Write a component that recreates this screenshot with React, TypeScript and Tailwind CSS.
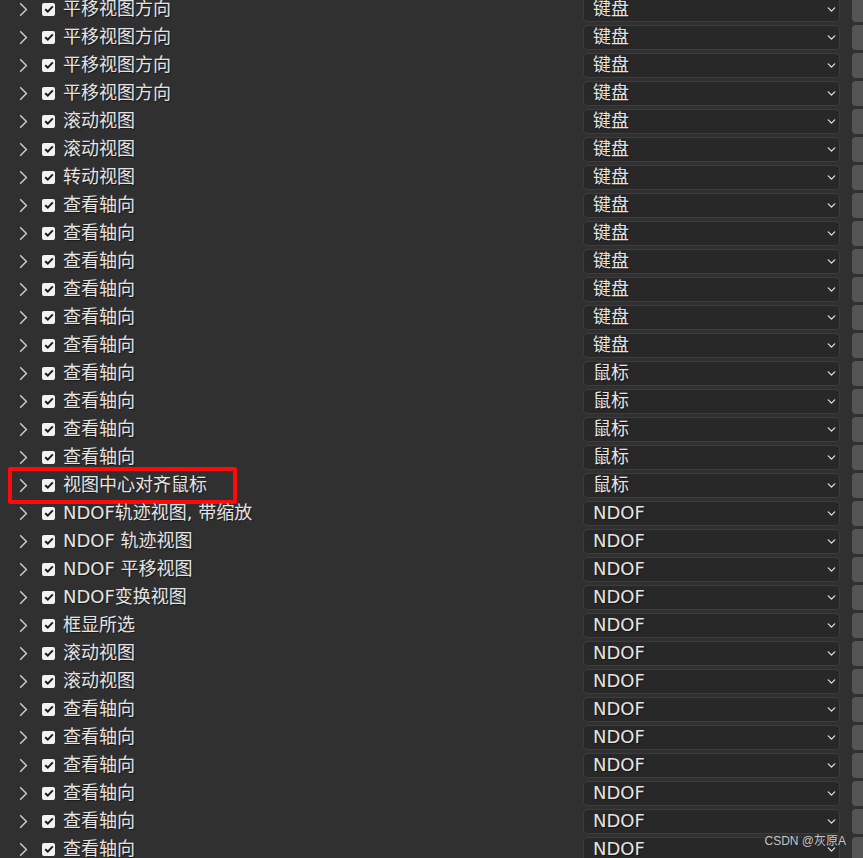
import { ChevronDown } from "lucide-react";

type Row = { label: string; device: string };

const rows: Row[] = [
  ...Array(4).fill({ label: "平移视图方向", device: "键盘" }),
  { label: "滚动视图", device: "键盘" },
  { label: "滚动视图", device: "键盘" },
  { label: "转动视图", device: "键盘" },
  ...Array(6).fill({ label: "查看轴向", device: "键盘" }),
  ...Array(4).fill({ label: "查看轴向", device: "鼠标" }),
  { label: "视图中心对齐鼠标", device: "鼠标" },
  { label: "NDOF轨迹视图, 带缩放", device: "NDOF" },
  { label: "NDOF 轨迹视图", device: "NDOF" },
  { label: "NDOF 平移视图", device: "NDOF" },
  { label: "NDOF变换视图", device: "NDOF" },
  { label: "框显所选", device: "NDOF" },
  { label: "滚动视图", device: "NDOF" },
  { label: "滚动视图", device: "NDOF" },
  ...Array(6).fill({ label: "查看轴向", device: "NDOF" }),
];

function CheckBox() {
  return (
    <div className="w-[13px] h-[13px] rounded-[2px] bg-[#f2f2f2] flex items-center justify-center shrink-0">
      <svg width="10" height="8" viewBox="0 0 10 8">
        <path d="M1.2 4.2 L3.8 6.6 L8.8 1.4" fill="none" stroke="#1c1c1c" strokeWidth="2" />
      </svg>
    </div>
  );
}

export default function App() {
  return (
    <div
      className="relative w-[863px] h-[858px] overflow-hidden bg-[#303030] text-[#e4e4e4]"
      style={{ fontFamily: '"DejaVu Sans", "Noto Sans CJK SC", sans-serif' }}
    >
      <div className="-mt-[5px] flex flex-col">
        {rows.map((row, i) => (
          <div key={i} className="relative flex items-center h-[28px] shrink-0">
            <div className="w-[583px] shrink-0 flex items-center">
              {/* expand arrow */}
              <svg width="9" height="15" viewBox="0 0 9 15" className="ml-[19px] shrink-0">
                <path d="M1.2 1.2 L7.4 7.5 L1.2 13.8" fill="none" stroke="#cfcfcf" strokeWidth="1.4" />
              </svg>
              <div className="ml-[14px]">
                <CheckBox />
              </div>
              <span className="ml-[8px] text-[18px] leading-none whitespace-nowrap [text-shadow:1px_1px_1px_rgba(0,0,0,0.5)]">
                {row.label}
              </span>
            </div>
            <div className="w-[257px] h-[25px] shrink-0 rounded-[4px] bg-[#282828] border border-[#3c3c3c] flex items-center justify-between pl-[9px] pr-[1px]">
              <span className="text-[18px] leading-none whitespace-nowrap [text-shadow:1px_1px_1px_rgba(0,0,0,0.5)]">
                {row.device}
              </span>
              <ChevronDown size={13} strokeWidth={2.4} className="text-[#dcdcdc]" />
            </div>
            <div className="ml-[12px] w-[24px] h-[25px] shrink-0 rounded-[4px] bg-[#545454]" />
            {i === 17 && (
              <div className="absolute left-[8px] top-[-4px] w-[229px] h-[37px] border-[4px] border-[#ff0a0a] rounded-[2px]" />
            )}
          </div>
        ))}
      </div>
      <div
        className="absolute right-[17px] bottom-[8px] text-[12px] text-[#d8d8d8]/90 whitespace-nowrap"
        style={{ fontFamily: '"Liberation Sans", "Noto Sans CJK SC", sans-serif' }}
      >
        CSDN @灰原A
      </div>
    </div>
  );
}
